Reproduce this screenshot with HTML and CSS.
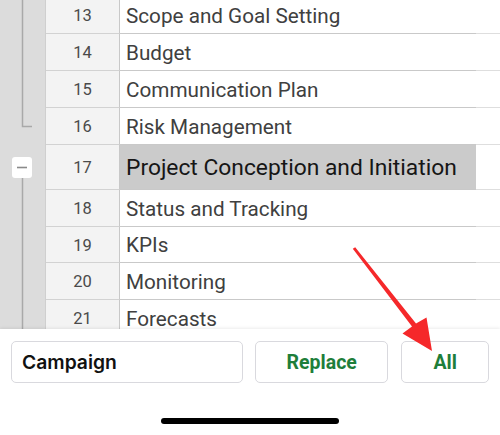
FILE: index.html
```html
<!DOCTYPE html>
<html>
<head>
<meta charset="utf-8">
<link rel="stylesheet" href="styles.css">
</head>
<body>
<div class="screen">
  <div class="sheet">
    <div class="gutter">
      <svg class="gutter-svg" width="45" height="329" viewBox="0 0 45 329">
        <path d="M22.5 0 V126.5 H32" fill="none" stroke="#a9a9a9" stroke-width="1.5"/>
        <path d="M22.5 178 V329" fill="none" stroke="#a9a9a9" stroke-width="1.5"/>
        <rect x="12" y="157" width="20" height="21" rx="3" fill="#ffffff"/>
        <path d="M17 167.5 H27" stroke="#8a8a8a" stroke-width="1.6"/>
      </svg>
    </div>
    <div class="grid">
      <div class="row first"><div class="rh">13</div><div class="cell">Scope and Goal Setting</div><div class="cell-b"></div></div>
      <div class="row"><div class="rh">14</div><div class="cell">Budget</div><div class="cell-b"></div></div>
      <div class="row"><div class="rh">15</div><div class="cell">Communication Plan</div><div class="cell-b"></div></div>
      <div class="row"><div class="rh">16</div><div class="cell">Risk Management</div><div class="cell-b"></div></div>
      <div class="row tall"><div class="rh">17</div><div class="cell selected">Project Conception and Initiation</div><div class="cell-b"></div></div>
      <div class="row"><div class="rh">18</div><div class="cell">Status and Tracking</div><div class="cell-b"></div></div>
      <div class="row short"><div class="rh">19</div><div class="cell">KPIs</div><div class="cell-b"></div></div>
      <div class="row"><div class="rh">20</div><div class="cell">Monitoring</div><div class="cell-b"></div></div>
      <div class="row"><div class="rh">21</div><div class="cell">Forecasts</div><div class="cell-b"></div></div>
    </div>
  </div>
  <div class="panel">
    <div class="controls">
      <div class="field">Campaign</div>
      <button class="btn btn-replace">Replace</button>
      <button class="btn btn-all">All</button>
    </div>
    <div class="home-bar"></div>
  </div>
  <svg class="arrow" width="500" height="435" viewBox="0 0 500 435">
    <polygon points="355.2,247.3 416,323.5 426.5,317.5 432,351 402.5,333.5 412,326.5 352.8,248.7" fill="#f5282a"/>
  </svg>
</div>
</body>
</html>
```
FILE: styles.css
```css
* { box-sizing: border-box; }
html, body { margin: 0; padding: 0; }
body {
  width: 500px;
  height: 435px;
  overflow: hidden;
  background: #ffffff;
  font-family: Roboto, "Liberation Sans", Arial, sans-serif;
}
.screen {
  position: relative;
  width: 500px;
  height: 435px;
  display: flex;
  flex-direction: column;
}
.sheet {
  height: 329px;
  display: flex;
  overflow: hidden;
  flex: none;
}
.gutter {
  width: 46px;
  flex: none;
  background: #dcdcdc;
  border-right: 1px solid #cfcfcf;
}
.gutter-svg { display: block; }
.grid {
  flex: 1;
  display: flex;
  flex-direction: column;
}
.row {
  display: flex;
  height: 37px;
  flex: none;
}
.row.first { margin-top: -3px; }
.row.tall { height: 45px; }
.row.short { height: 36px; }
.rh {
  width: 74px;
  flex: none;
  background: #f3f3f3;
  border-right: 1px solid #c8c8c8;
  border-bottom: 1px solid #d2d2d2;
  display: flex;
  align-items: center;
  justify-content: center;
  font-size: 16.5px;
  color: #4a4a4a;
  padding-top: 1px;
}
.cell {
  width: 356px;
  flex: none;
  border-bottom: 1px solid #c9c9c9;
  display: flex;
  align-items: center;
  padding-left: 6px;
  font-size: 20.7px;
  color: #404040;
  white-space: nowrap;
  overflow: hidden;
  padding-top: 1px;
}
.cell.selected {
  background: #cbcbcb;
  font-size: 22.8px;
  color: #161616;
}
.cell-b {
  flex: 1;
  border-bottom: 1px solid #dedede;
}
.panel {
  flex: 1;
  background: #ffffff;
  box-shadow: 0 -1px 3px rgba(0, 0, 0, 0.08);
  position: relative;
  display: flex;
  flex-direction: column;
  align-items: center;
  padding: 12px 11px 0;
}
.controls {
  display: flex;
  gap: 12px;
  width: 100%;
}
.field {
  width: 233px;
  height: 42px;
  border: 1px solid #d9d9de;
  border-radius: 5px;
  display: flex;
  align-items: center;
  padding-left: 10px;
  font-family: Inter, Roboto, sans-serif;
  font-weight: 600;
  font-size: 19.3px;
  color: #111111;
}
.btn {
  height: 42px;
  border: 1px solid #d9d9de;
  border-radius: 5px;
  background: #ffffff;
  font-family: Roboto, "Liberation Sans", sans-serif;
  font-weight: 700;
  font-size: 19.5px;
  color: #1e7e3a;
  padding: 0;
}
.btn-replace { width: 134px; }
.btn-all { width: 88px; margin-left: 1px; }
.home-bar {
  margin-top: 35px;
  width: 178px;
  height: 6px;
  border-radius: 3px;
  background: #000000;
}
.arrow {
  position: absolute;
  left: 0;
  top: 0;
  pointer-events: none;
}
```
